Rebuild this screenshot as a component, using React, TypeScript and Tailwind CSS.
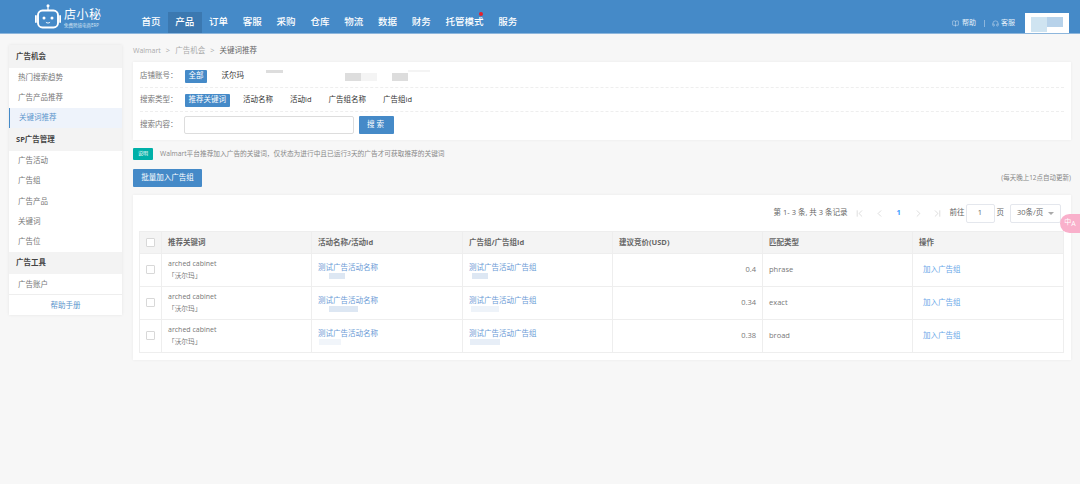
import { BookOpen, ChevronFirst, ChevronLast, ChevronLeft, ChevronRight, Headphones } from "lucide-react";

const FONT = "font-['Open_Sans','Noto_Sans_CJK_SC',sans-serif]";

const navItems = ["首页", "产品", "订单", "客服", "采购", "仓库", "物流", "数据", "财务", "托管模式", "服务"];

const sideGroups = [
  { title: "广告机会", items: ["热门搜索趋势", "广告产品推荐", "关键词推荐"] },
  { title: "SP广告管理", items: ["广告活动", "广告组", "广告产品", "关键词", "广告位"] },
  { title: "广告工具", items: ["广告账户"] },
];

const rows = [
  { price: "0.4", match: "phrase", idA: "w-[16px] ml-[11px]", idB: "w-[16px] ml-[3px]" },
  { price: "0.34", match: "exact", idA: "w-[29px] ml-[11px]", idB: "w-[28px] ml-[2px] opacity-50" },
  { price: "0.38", match: "broad", idA: "w-[22px] ml-[1px] opacity-40", idB: "w-[30px] ml-[1px] opacity-70" },
];

const RobotLogo = () => (
  <svg width="26" height="25" viewBox="0 0 26 25" fill="none">
    <circle cx="13" cy="1.8" r="1.5" fill="#fff" />
    <rect x="12.4" y="2" width="1.2" height="5" fill="#fff" />
    <rect x="3" y="6.5" width="20" height="17" rx="4.5" stroke="#fff" strokeWidth="1.9" />
    <rect x="0" y="11" width="1.8" height="8" rx="0.9" fill="#fff" />
    <rect x="24.2" y="11" width="1.8" height="8" rx="0.9" fill="#fff" />
    <circle cx="9" cy="14" r="1.5" fill="#fff" />
    <circle cx="17" cy="14" r="1.5" fill="#fff" />
    <path d="M11.2 18.5c1 .8 2.6 .8 3.6 0" stroke="#fff" strokeWidth="0.9" strokeLinecap="round" />
  </svg>
);

const Header = () => (
  <header className="flex h-[34px] items-end border-b border-[#8db6dc] bg-[#458ac8] pr-[11px] text-white">
    <div className="flex h-full w-[134px] items-center pl-[35px]">
      <RobotLogo />
      <div className="ml-[3px] flex flex-col pt-[3px]">
        <span className="text-[12px] leading-[14px] tracking-[0.5px]">店小秘</span>
        <span className="mt-[1px] text-[4.5px] leading-[5px] text-[#d5e5f3]">免费跨境电商ERP</span>
      </div>
    </div>
    <nav className="flex h-[21px]">
      {navItems.map((item) => (
        <span
          key={item}
          className={`relative flex items-center px-[7.4px] text-[9.5px] font-medium ${item === "产品" ? "bg-[#3b78b0]" : ""}`}
        >
          {item}
          {item === "托管模式" && (
            <span className="absolute right-[8px] top-[0px] h-[4px] w-[4px] rounded-full bg-[#e8202a]" />
          )}
        </span>
      ))}
    </nav>
    <div className="ml-auto flex h-[20px] items-center text-[7px] text-[#e6f0f9]">
      <BookOpen size={7} strokeWidth={1.5} />
      <span className="ml-[3px]">帮助</span>
      <span className="mx-[7.5px] h-[7px] w-px bg-[#8db6dc]" />
      <Headphones size={7} strokeWidth={1.5} />
      <span className="ml-[2px]">客服</span>
      <div className="ml-[10px] flex h-[20px] w-[44px] items-start bg-white px-[6px] pt-[4px]">
        <div className="h-[15px] w-[18px] bg-[#cfe4f1]" />
        <div className="h-[10px] w-[17px] bg-[#b7d2ea]" />
      </div>
    </div>
  </header>
);

const Sidebar = () => (
  <aside className="w-[113px] shrink-0 bg-white text-[7.5px] text-[#777] shadow-[0_0_3px_rgba(0,0,0,0.08)]">
    {sideGroups.map((group) => (
      <div key={group.title}>
        <div className="flex h-[22.6px] items-center bg-[#f3f3f3] pl-[7px] font-bold text-[#444]">{group.title}</div>
        <ul>
          {group.items.map((item) => (
            <li
              key={item}
              className={`flex h-[20.2px] items-center pl-[9px] ${item === "关键词推荐" ? "border-l border-[#458ac8] bg-[#eef3fb] pl-[8px] text-[#5b93cb]" : ""}`}
            >
              {item}
            </li>
          ))}
        </ul>
      </div>
    ))}
    <div className="flex h-[21px] items-center justify-center border-t border-[#eee] text-[#5b93cb]">帮助手册</div>
  </aside>
);

const Pill = ({ active, children }: { active?: boolean; children: React.ReactNode }) => (
  <span
    className={`flex h-[13px] items-center rounded-[1px] px-[3.5px] text-[7.5px] ${active ? "bg-[#458ac8] text-white" : "text-[#333]"}`}
  >
    {children}
  </span>
);

const FilterCard = () => (
  <section className="mt-[5px] bg-white px-[7px] text-[7.5px] text-[#777] shadow-[0_0_3px_rgba(0,0,0,0.06)]">
    <div className="flex h-[26px] items-center border-b border-dashed border-[#eee] pt-[3px]">
      <span className="w-[45px]">店铺账号：</span>
      <Pill active>全部</Pill>
      <span className="ml-[14.5px] text-[#333]">沃尔玛</span>
      <div className="ml-[22px] flex h-[12px] w-[165px] items-start">
        <div className="h-[3px] w-[17px] bg-[#ddd]" />
        <div className="ml-[62px] mt-[3px] h-[8px] w-[16px] bg-[#ddd]" />
        <div className="mt-[3px] h-[8px] w-[16px] bg-[#f4f4f4]" />
        <div className="ml-[15px] mt-[3px] h-[8px] w-[16px] bg-[#ddd]" />
        <div className="h-[2px] w-[22px] bg-[#f4f4f4]" />
      </div>
    </div>
    <div className="flex h-[24px] items-center border-b border-dashed border-[#eee] pt-[1px]">
      <span className="w-[45px]">搜索类型：</span>
      <Pill active>推荐关键词</Pill>
      <span className="ml-[10px]"><Pill>活动名称</Pill></span>
      <span className="ml-[10px]"><Pill>活动id</Pill></span>
      <span className="ml-[10px]"><Pill>广告组名称</Pill></span>
      <span className="ml-[10px]"><Pill>广告组id</Pill></span>
    </div>
    <div className="flex h-[28px] items-center pb-[2px]">
      <span className="w-[44px]">搜索内容：</span>
      <div className="h-[18px] w-[170px] rounded-[2px] border border-[#ddd] bg-white" />
      <button className="ml-[5px] h-[18px] w-[35px] rounded-[1px] bg-[#458ac8] text-[7.5px] tracking-[2px] text-white">搜索</button>
    </div>
  </section>
);

const Toolbar = () => (
  <>
    <div className="mt-[8px] flex h-[12px] items-center text-[6.7px] text-[#888]">
      <span className="flex h-[12px] w-[20px] items-center justify-center rounded-[1px] bg-[#00b0a8] text-[5px] text-white">说明</span>
      <span className="ml-[7px]">Walmart平台推荐加入广告的关键词，仅状态为进行中且已运行3天的广告才可获取推荐的关键词</span>
    </div>
    <div className="mt-[9px] flex items-center justify-between">
      <button className="h-[18px] w-[69px] rounded-[1px] bg-[#458ac8] text-[7.5px] text-white">批量加入广告组</button>
      <span className="text-[6.5px] text-[#888]">(每天晚上12点自动更新)</span>
    </div>
  </>
);

const Pagination = () => (
  <div className="flex h-[36px] items-center justify-end pr-[10px] text-[7.5px] text-[#666]">
    <span>第 1- 3 条, 共 3 条记录</span>
    <div className="ml-[2.5px] flex items-center text-[#bdbdbd]">
      <span className="flex w-[19.5px] justify-center"><ChevronFirst size={11} strokeWidth={1.1} /></span>
      <span className="flex w-[19.5px] justify-center"><ChevronLeft size={11} strokeWidth={1.1} /></span>
      <span className="flex w-[19.5px] justify-center font-bold text-[#409eff]">1</span>
      <span className="flex w-[19.5px] justify-center"><ChevronRight size={11} strokeWidth={1.1} /></span>
      <span className="flex w-[19.5px] justify-center"><ChevronLast size={11} strokeWidth={1.1} /></span>
    </div>
    <span className="ml-[2px]">前往</span>
    <div className="ml-[1px] flex h-[19px] w-[29px] items-center justify-center rounded-[2px] border border-[#e4e7ed]">1</div>
    <span className="ml-[2px]">页</span>
    <div className="ml-[6px] flex h-[19px] w-[51px] items-center justify-between rounded-[2px] border border-[#e4e7ed] pl-[6px] pr-[6px]">
      <span>30条/页</span>
      <span className="h-0 w-0 border-x-[3px] border-t-[3px] border-x-transparent border-t-[#aaa]" />
    </div>
  </div>
);

const Checkbox = () => <div className="mx-auto h-[9px] w-[9px] rounded-[1px] border border-[#d8d8d8] bg-white" />;

const headCells = ["推荐关键词", "活动名称/活动id", "广告组/广告组id", "建议竞价(USD)", "匹配类型", "操作"];

const DataTable = () => (
  <div className="mx-[6px] pb-[7px]">
    <table className="w-[924px] table-fixed border-collapse border border-[#eee] text-[7.5px] text-[#777]">
      <colgroup>
        <col className="w-[22px]" />
        <col className="w-[150px]" />
        <col className="w-[151px]" />
        <col className="w-[150px]" />
        <col className="w-[150px]" />
        <col className="w-[150px]" />
        <col className="w-[151px]" />
      </colgroup>
      <thead>
        <tr className="h-[21.7px] bg-[#f4f4f4]">
          <th className="border border-[#eee]"><Checkbox /></th>
          {headCells.map((cell) => (
            <th key={cell} className="border border-[#eee] pl-[6px] text-left font-bold text-[#666]">{cell}</th>
          ))}
        </tr>
      </thead>
      <tbody>
        {rows.map((row) => (
          <tr key={row.match} className="h-[33px]">
            <td className="border border-[#eee]"><Checkbox /></td>
            <td className="border border-[#eee] pl-[6px] leading-[12px]">
              <div className="text-[7px]">arched cabinet</div>
              <div className="text-[6.7px]">「沃尔玛」</div>
            </td>
            <td className="border border-[#eee] pl-[6px] leading-[12px] text-[#6b9bd6]">
              <div>测试广告活动名称</div>
              <div className={`h-[6px] bg-[#dde7f3] ${row.idA}`} />
            </td>
            <td className="border border-[#eee] pl-[6px] leading-[12px] text-[#6b9bd6]">
              <div>测试广告活动广告组</div>
              <div className={`h-[6px] bg-[#dde7f3] ${row.idB}`} />
            </td>
            <td className="border border-[#eee] pr-[6px] text-right">{row.price}</td>
            <td className="border border-[#eee] pl-[6px]">{row.match}</td>
            <td className="border border-[#eee] pl-[10px] text-[#6aa8e8]">加入广告组</td>
          </tr>
        ))}
      </tbody>
    </table>
  </div>
);

export default function App() {
  return (
    <div className={`relative h-[484px] w-[1080px] overflow-hidden bg-[#f7f7f7] ${FONT}`}>
      <Header />
      <div className="flex items-start gap-[11px] pl-[9px] pr-[9px] pt-[11px]">
        <Sidebar />
        <main className="min-w-0 flex-1">
          <div className="flex h-[12px] items-center gap-[5px] text-[7.5px] text-[#aaa]">
            <span className="text-[7px]">Walmart</span>
            <span>&gt;</span>
            <span>广告机会</span>
            <span>&gt;</span>
            <span className="text-[#666]">关键词推荐</span>
          </div>
          <FilterCard />
          <Toolbar />
          <section className="mt-[8px] bg-white shadow-[0_0_3px_rgba(0,0,0,0.06)]">
            <Pagination />
            <DataTable />
          </section>
        </main>
      </div>
      <div className="absolute right-0 top-[214px] flex h-[19px] w-[20px] items-center justify-center rounded-l-[10px] bg-[#f9b0cb] text-[7px] text-white">
        <span className="-translate-y-[1px]">中</span>
        <span className="translate-y-[1px]">A</span>
      </div>
    </div>
  );
}
